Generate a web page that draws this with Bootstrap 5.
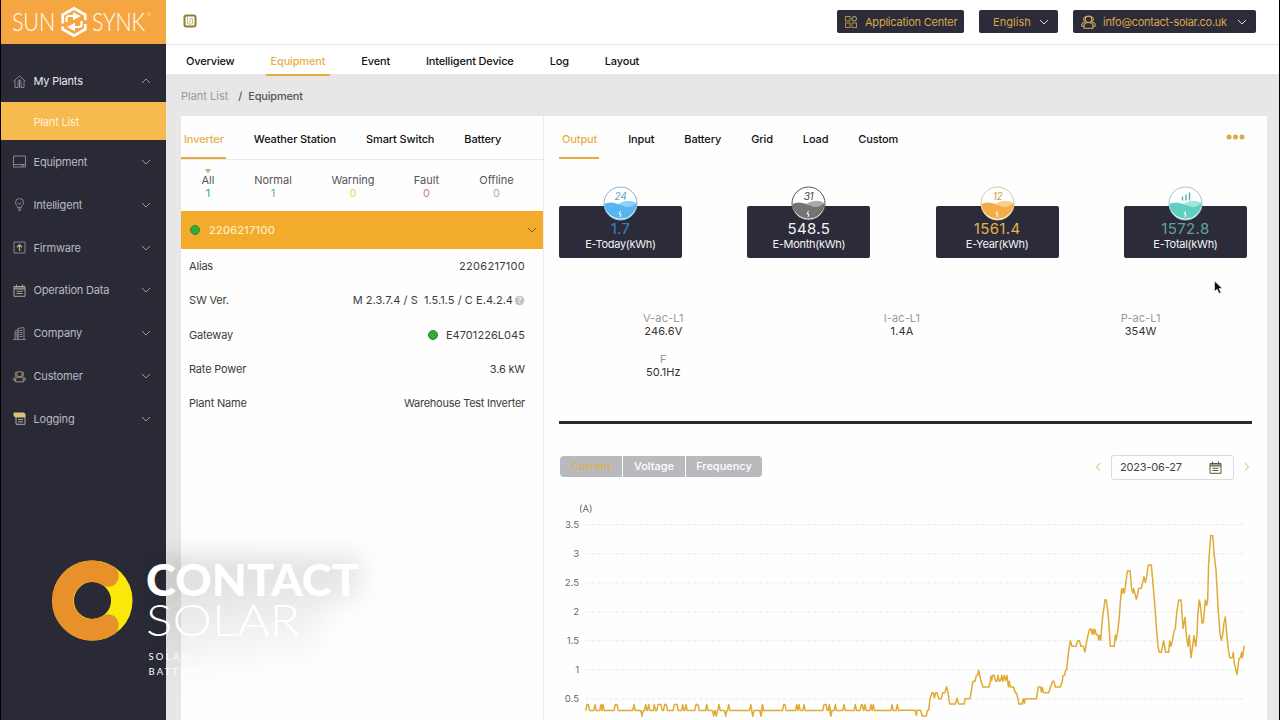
<!DOCTYPE html>
<html lang="en">
<head>
<meta charset="utf-8">
<meta name="viewport" content="width=device-width, initial-scale=1">
<title>Sunsynk – Equipment</title>
<link href="https://cdn.jsdelivr.net/npm/bootstrap@5.3.0/dist/css/bootstrap.min.css" rel="stylesheet">
<style>
:root{--gold:#d9a748;--ink:#2b2b3a}
body{font-family:Inter,"Liberation Sans",sans-serif;font-size:11px;line-height:14px;color:#333;background:#e7e7e7;height:720px;overflow:hidden;border-left:1px solid #000;border-right:1px solid #000;letter-spacing:-.18px}
svg{display:block;flex:none}
.side{width:165px;background:#292a35;color:#b9bac1}
.logo{height:44px;background:#f6a640}
.side-item{height:42.85px;padding:1px 15px 0 12px}
.side-item .ico{margin-right:7.500px}
.side-item.top{height:58px;padding-top:16px;color:#e8e8ea}
.side-sub{height:38px;background:#f6ba4f;color:#fdf3d8;padding-left:32.5px;padding-top:1px}
.ico{fill:none;stroke:#85868d;stroke-width:1}
.chev{fill:none;stroke:#a3997f;stroke-width:1}
.topbar{height:44.5px;border-bottom:1px solid #e4e4e4;padding:0 23px 0 17px}
.dark-btn{background:var(--ink);color:var(--gold);border-radius:2px;height:23px}
.tabs1{height:29.5px;color:#111;font-weight:500;letter-spacing:-.17px}
.tabs1 span{padding:9px 5px 0;height:31px}
.act{color:#e6b14a!important;border-bottom:2px solid #e6ab3c}
.crumb{height:42px;padding:1px 15px 0;color:#555;font-weight:500}
.panel-l{width:363px;background:#fefefe;border-right:1px solid #ececec}
.panel-r{width:723px;background:#fefefe}
.tabs2{height:43px;color:#111;font-weight:500;letter-spacing:-.13px}
.tabs2 span{height:43px;padding-top:16px}
.counts{height:52px;border-top:1px solid #e9e9e9;color:#555;line-height:12.6px;letter-spacing:0}
.counts>div{padding-top:14px}
.inv{height:38px;background:#f3ab2c;color:#fceccb;padding:0 6px 0 9px;font-weight:500;letter-spacing:.2px}
.dot{width:10px;height:10px;border-radius:50%;background:#37a93c;border:1px solid #2b8a30}
.info{height:34.25px;padding:0 18px 0 8px;color:#3c3c3c}
.num{letter-spacing:.06px}
.ecard{width:123px;height:52px;background:var(--ink);border-radius:2px;color:#f4f4f4;padding-top:14.5px;line-height:14px;letter-spacing:-.28px}
.ecard b{font-weight:400;font-size:15px;line-height:15px;letter-spacing:.35px}
.ecard svg{left:44px;top:-20px}
.cards{padding:47px 20px 0 15px}
.read{margin:54px 7px 0 0;line-height:13px;color:#333;letter-spacing:.1px}
.read i{font-style:normal;color:#999}
.rule{height:3px;background:#2a2933;margin:42px 15px 0}
.seg span{background:#b9b9be;color:#fff;height:21px;line-height:21px;font-weight:500;letter-spacing:0}
.date{width:123px;height:25px;border:1px solid #dcdcdc;border-radius:3px;color:#444}
.brand{left:30px;top:530px}
.pointer{left:1212px;top:280px}
</style>
</head>
<body class="d-flex position-relative">
<svg width="0" height="0" class="position-absolute"><defs>
<symbol id="dn" viewBox="0 0 10 6"><path d="M1 1l4 4 4-4"/></symbol>
<symbol id="people" viewBox="0 0 14 13"><circle cx="7" cy="4" r="3"/><path d="M2.8 12.3v-2C2.8 8 4.3 7 7 7s4.2 1 4.2 3.3v2zM4 6.2C2 5.8 1.8 2 4.3 1.3M10 6.2c2-.4 2.200-4.200-.3-4.900M.7 10.500C.6 8.500 1.500 7 3.500 6.800M.7 10.500h2M13.300 10.500c.1-2-.8-3.500-2.800-3.700M13.300 10.500h-2"/></symbol>
<symbol id="cal" viewBox="0 0 13 13"><path d="M1 2.500h11v9.800H1zM1 5h11M1 4h11M3.500.5v3M9.500.5v3M3.500 7.300h6M3.500 9.500h6"/></symbol>
</defs></svg>

<aside class="side d-flex flex-column">
  <div class="logo">
    <svg width="165" height="44" fill="#fff" font-family="Lato" font-weight="300" font-size="24.500">
      <text x="11" y="31" textLength="43" lengthAdjust="spacingAndGlyphs">SUN</text>
      <text x="91" y="31" textLength="53" lengthAdjust="spacingAndGlyphs">SYNK</text>
      <text x="146" y="17" font-size="5">®</text>
      <path d="M61.700 23.500V14.800L73 8.300l11.300 6.500V20" fill="none" stroke="#fff" stroke-width="2.800"/>
      <path d="M61.700 26.500v2.700L73 35.700l11.300-6.500V24" fill="none" stroke="#fff" stroke-width="2.800"/>
      <path d="M65.500 22v-3.500q0-2.500 2.500-2.500h5M80.500 21v3.500q0 2.500-2.500 2.500h-5" fill="none" stroke="#fff" stroke-width="2.200"/>
      <path d="M72 12.200l8 3.800-8 4.300zM74 22.700l-8 4.300 8 4.200z"/>
    </svg>
  </div>
  <div class="side-item top d-flex align-items-center">
    <svg class="ico" width="13" height="13"><path d="M.5 6.500L6.500.8l6 5.700M2 5.500v7h3v-6l1.500-2L8 6.500v6h3v-7M6.500 5v8"/></svg>
    <span>My Plants</span><svg class="chev ms-auto" width="10" height="6" style="transform:scaleY(-1)"><use href="#dn"/></svg></div>
  <div class="side-sub d-flex align-items-center">Plant List</div>
  <div class="side-item d-flex align-items-center"><svg class="ico" width="13" height="13"><path d="M.5 1h12v11H.5zM.5 9.500h12M8 10.900h3"/></svg><span>Equipment</span><svg class="chev ms-auto" width="10" height="6"><use href="#dn"/></svg></div>
  <div class="side-item d-flex align-items-center"><svg class="ico" width="13" height="13"><path d="M4.700 9.500C4.700 7.500 2.500 7 2.500 4.500a4 4 0 0 1 8 0c0 2.500-2.200 3-2.200 5zM4.700 11h3.600M5.300 12.500h2.400M5 4.500l1.500 2 1.500-2"/></svg><span>Intelligent</span><svg class="chev ms-auto" width="10" height="6"><use href="#dn"/></svg></div>
  <div class="side-item d-flex align-items-center"><svg class="ico" width="13" height="13"><path d="M1 1h11v11H1z"/><path d="M6.500 10V4M4 6.200l2.500-2.500L9 6.200" stroke="#c0a878" stroke-width="1.300"/></svg><span>Firmware</span><svg class="chev ms-auto" width="10" height="6"><use href="#dn"/></svg></div>
  <div class="side-item d-flex align-items-center"><svg class="ico" width="13" height="13" style="stroke:#aaa595"><use href="#cal"/></svg><span>Operation Data</span><svg class="chev ms-auto" width="10" height="6"><use href="#dn"/></svg></div>
  <div class="side-item d-flex align-items-center"><svg class="ico" width="13" height="13"><path d="M0 12.500h13M2 12V4l3-1v9M5 12V1.500l6-1V12M6.500 3.500h3M6.500 5.500h3M6.500 7.500h3M6.500 9.500h3M2.500 6h2M2.500 8h2M2.500 10h2"/></svg><span>Company</span><svg class="chev ms-auto" width="10" height="6"><use href="#dn"/></svg></div>
  <div class="side-item d-flex align-items-center"><svg class="ico" width="13" height="13" style="stroke:#b5a27c"><use href="#people"/></svg><span>Customer</span><svg class="chev ms-auto" width="10" height="6"><use href="#dn"/></svg></div>
  <div class="side-item d-flex align-items-center"><svg class="ico" width="13" height="13"><path d="M1 1h10l1 1v3H3L1 4z" fill="#dcc07c" stroke="#dcc07c"/><path d="M3 5v7.300h9V5M5 7.500h5M5 9.800h5" stroke="#aaa"/></svg><span>Logging</span><svg class="chev ms-auto" width="10" height="6"><use href="#dn"/></svg></div>
</aside>

<main class="flex-grow-1 d-flex flex-column">
  <header class="topbar bg-white d-flex align-items-center flex-shrink-0">
    <svg width="14" height="14" style="margin-top:-1px"><rect x="1.500" y="1.500" width="11" height="11" rx="2" fill="#fff" stroke="#8f7c35" stroke-width="2"/><path d="M4.500 3v7h5V4.500H7V9" fill="none" stroke="#cdbb78" stroke-width="1"/></svg>
    <div class="dark-btn ms-auto d-flex align-items-center px-2" style="width:127px">
      <svg width="12" height="12" fill="none" stroke="#b58c40"><rect x=".5" y=".5" width="4.500" height="4.500"/><circle cx="9.200" cy="2.800" r="2.300" stroke="#c9b8a0"/><rect x=".5" y="7" width="4.500" height="4.500"/><rect x="7" y="7" width="4.500" height="4.500"/></svg>
      <span class="text-nowrap" style="margin-left:8px;letter-spacing:-.22px">Application Center</span></div>
    <div class="dark-btn d-flex align-items-center" style="width:79px;margin-left:15px;padding:0 9px 0 14px"><span class="num">English</span><svg class="ms-auto" width="10" height="6" fill="none" stroke="#ddd"><use href="#dn"/></svg></div>
    <div class="dark-btn d-flex align-items-center" style="width:183px;margin-left:15px;padding:0 9px 0 8px"><svg width="15" height="14" fill="none" stroke="#d8ae5c"><use href="#people"/></svg><span style="margin-left:7px;letter-spacing:-.28px">info@contact-solar.co.uk</span><svg class="ms-auto" width="10" height="6" fill="none" stroke="#ddd"><use href="#dn"/></svg></div>
  </header>
  <nav class="tabs1 bg-white d-flex flex-shrink-0" style="padding-left:15px;gap:26px">
    <span>Overview</span><span class="act">Equipment</span><span>Event</span><span>Intelligent Device</span><span>Log</span><span>Layout</span>
  </nav>
  <div class="crumb d-flex align-items-center flex-shrink-0"><span style="color:#999;font-weight:400;letter-spacing:0">Plant List</span><span style="margin:0 6px 0 10px">/</span><span>Equipment</span></div>
  <div class="d-flex flex-grow-1" style="padding-left:15px;min-height:0">
    <section class="panel-l">
      <div class="tabs2 d-flex"><span class="act" style="padding-left:3px;padding-right:2px">Inverter</span><span style="margin-left:28px">Weather Station</span><span style="margin-left:30px">Smart Switch</span><span style="margin-left:30px">Battery</span></div>
      <div class="counts d-flex text-center position-relative">
        <svg class="position-absolute" style="left:24px;top:9px" width="6" height="5"><path d="M0 0h6L3 4.500z" fill="#c9b36a"/></svg>
        <div style="width:54px">All<br><span style="color:#3aa88c">1</span></div>
        <div style="width:76px">Normal<br><span style="color:#5cc25c">1</span></div>
        <div style="width:84px">Warning<br><span style="color:#dcdc5c">0</span></div>
        <div style="width:63px">Fault<br><span style="color:#d08090">0</span></div>
        <div style="width:77px">Offline<br><span style="color:#b0b0b0">0</span></div>
      </div>
      <div class="inv d-flex align-items-center"><span class="dot"></span><span style="margin-left:9px">2206217100</span><svg class="ms-auto" width="10" height="6" fill="none" stroke="#7a5620"><use href="#dn"/></svg></div>
      <div class="info d-flex align-items-center">Alias<span class="ms-auto" style="letter-spacing:.3px">2206217100</span></div>
      <div class="info d-flex align-items-center">SW Ver.<span class="ms-auto num" style="white-space:pre;letter-spacing:.04px">M 2.3.7.4 / S  1.5.1.5 / C E.4.2.4</span><svg width="11" height="11" style="margin-left:1px"><circle cx="5.500" cy="5.500" r="4.800" fill="#c4c4c4"/><text x="5.500" y="8.300" font-size="8" fill="#fff" text-anchor="middle">?</text></svg></div>
      <div class="info d-flex align-items-center">Gateway<span class="dot ms-auto"></span><span class="num" style="margin-left:8px">E4701226L045</span></div>
      <div class="info d-flex align-items-center">Rate Power<span class="ms-auto">3.6 kW</span></div>
      <div class="info d-flex align-items-center">Plant Name<span class="ms-auto" style="letter-spacing:-.26px">Warehouse Test Inverter</span></div>
    </section>
    <section class="panel-r">
      <div class="tabs2 d-flex" style="padding-left:15px"><span class="act" style="padding-left:3px;padding-right:2px">Output</span><span style="margin-left:29px">Input</span><span style="margin-left:30px">Battery</span><span style="margin-left:30px">Grid</span><span style="margin-left:30px">Load</span><span style="margin-left:30px">Custom</span>
        <svg class="ms-auto" style="margin:18px 22px 0 0" width="19" height="6" fill="#d9ab4c"><circle cx="3" cy="3" r="2.500"/><circle cx="9.500" cy="3" r="2.500"/><circle cx="16" cy="3" r="2.500"/></svg></div>
      <div class="cards d-flex justify-content-between text-center">
        <div class="ecard position-relative"><svg class="position-absolute" width="35" height="35"><circle cx="17.500" cy="17.500" r="16.500" fill="#fff" stroke="#7fb4d0"/><path d="M1.200 18q6-3 14 0t18.500-1A16.300 16.300 0 0 1 1.200 18z" fill="#58b4f2"/><path d="M15 18q10-6 18.500-1-4 4-10 4z" fill="#8fd0fa"/><text x="17.500" y="14" font-size="10" font-style="italic" fill="#5fa8cc" text-anchor="middle">24</text><path d="M17.500 25l-1.500 3h2l-1 3" stroke="#fff" fill="none"/></svg><b style="color:#2f84c8">1.7</b><br>E-Today(kWh)</div>
        <div class="ecard position-relative"><svg class="position-absolute" width="35" height="35"><circle cx="17.500" cy="17.500" r="16.500" fill="#fff" stroke="#555"/><path d="M1.200 18q6-3 14 0t18.500-1A16.300 16.300 0 0 1 1.200 18z" fill="#747474"/><path d="M15 18q10-6 18.500-1-4 4-10 4z" fill="#aaa"/><text x="17.500" y="14" font-size="10" font-style="italic" fill="#444" text-anchor="middle">31</text><path d="M17.500 25l-1.500 3h2l-1 3" stroke="#fff" fill="none"/></svg><b>548.5</b><br>E-Month(kWh)</div>
        <div class="ecard position-relative"><svg class="position-absolute" width="35" height="35"><circle cx="17.500" cy="17.500" r="16.500" fill="#fff" stroke="#dcc89a"/><path d="M1.200 18q6-3 14 0t18.500-1A16.300 16.300 0 0 1 1.200 18z" fill="#f2ad48"/><path d="M15 18q10-6 18.500-1-4 4-10 4z" fill="#f8cf90"/><text x="17.500" y="14" font-size="10" font-style="italic" fill="#cf9f4a" text-anchor="middle">12</text><path d="M17.500 25l-1.500 3h2l-1 3" stroke="#fff" fill="none"/></svg><b style="color:#e8b04a">1561.4</b><br>E-Year(kWh)</div>
        <div class="ecard position-relative"><svg class="position-absolute" width="35" height="35"><circle cx="17.500" cy="17.500" r="16.500" fill="#fff" stroke="#9cc8c0"/><path d="M1.200 18q6-3 14 0t18.500-1A16.300 16.300 0 0 1 1.200 18z" fill="#5dd0bf"/><path d="M15 18q10-6 18.500-1-4 4-10 4z" fill="#a0e6da"/><path d="M14.500 14.500v-4M18 14.500v-6M21.500 14.500v-8" stroke="#5fb3a5" stroke-width="1.500"/><path d="M17.500 25l-1.500 3h2l-1 3" stroke="#fff" fill="none"/></svg><b style="color:#62a3a0">1572.8</b><br>E-Total(kWh)</div>
      </div>
      <div class="read row g-0 text-center row-cols-3" style="row-gap:14.500px">
        <div><i>V-ac-L1</i><br>246.6V</div><div><i>I-ac-L1</i><br>1.4A</div><div><i>P-ac-L1</i><br>354W</div>
        <div><i>F</i><br>50.1Hz</div>
      </div>
      <div class="rule"></div>
      <div class="d-flex align-items-center" style="margin:31px 17px 0 16px;height:25px">
        <div class="seg d-flex text-center" style="gap:1px;margin-bottom:2px"><span class="rounded-start-1" style="width:62px;color:#d9af55">Current</span><span style="width:62px">Voltage</span><span class="rounded-end-1" style="width:76px">Frequency</span></div>
        <svg class="ms-auto" width="6" height="10" style="margin-right:10px" fill="none" stroke="#c9c069"><path d="M5 1L1.500 5 5 9"/></svg>
        <div class="date d-flex align-items-center" style="padding:0 11px 0 8px"><span>2023-06-27</span><svg class="ms-auto" width="13" height="13" fill="none" stroke="#5d573f"><use href="#cal"/></svg></div>
        <svg width="6" height="10" style="margin-left:10px" fill="none" stroke="#c9c069"><path d="M1 1l3.500 4L1 9"/></svg>
      </div>
      <svg width="723" height="240" viewBox="544 480 723 240" font-size="9.500" fill="#666" letter-spacing="0">
        <text x="579" y="512">(A)</text>
        <g id="axis" text-anchor="end"></g>
        <g fill="none" stroke="#e0ab35" stroke-width="1.500" stroke-linejoin="round">
          <path id="night"/>
          <g transform="translate(900 520) scale(.33333)" stroke-width="4.500"><polyline points="0,571 46,571 49,586 52,571 62,571 67,588 79,588 82,572 86,570 90,536 96,518 100,518 103,534 107,518 111,518 116,536 124,536 128,518 135,518 140,500 144,518 149,552 166,552 171,535 176,552 192,552 196,536 210,536 216,500 219,484 225,484 229,467 233,465 236,451 239,466 243,482 249,501 267,501 271,483 273,468 275,482 278,466 283,466 287,484 291,483 294,466 298,484 302,482 305,466 309,484 313,466 317,482 321,466 325,500 328,484 331,501 341,501 346,519 350,520 357,552 366,552 370,536 373,550 376,536 409,536 415,501 422,501 424,516 427,503 431,518 446,518 452,500 458,484 462,484 466,501 481,501 487,484 489,467 494,465 497,450 500,448 505,400 511,362 516,379 528,379 533,362 538,362 543,379 550,379 555,396 559,370 563,350 569,327 573,327 576,342 579,328 582,343 585,328 589,344 593,344 596,360 599,346 602,360 607,300 615,239 619,240 626,300 631,379 643,379 646,346 648,360 653,335 658,290 662,235 665,206 668,219 670,206 673,219 676,200 682,153 690,152 695,206 699,219 701,206 705,222 709,238 713,222 716,205 724,205 728,188 732,170 736,187 740,170 745,135 754,135 759,190 764,250 769,320 774,379 778,397 784,397 791,363 797,397 806,397 809,363 813,379 817,362 822,335 826,325 830,280 836,240 843,240 846,280 849,325 852,308 855,292 859,345 864,379 868,346 873,413 878,379 882,347 887,379 891,345 893,290 898,240 902,262 906,309 910,308 916,240 920,256 923,240 926,130 932,47 938,47 942,100 948,150 954,260 960,340 964,361 968,345 972,308 976,291 980,340 984,379 989,413 997,413 1000,397 1003,430 1011,464 1017,415 1021,414 1025,397 1027,413 1033,377"/></g>
        </g>
      </svg>
    </section>
  </div>
</main>

<svg class="brand position-absolute" width="380" height="180" viewBox="30 530 380 180">
  <defs><filter id="soft" x="-30%" y="-40%" width="160%" height="180%"><feGaussianBlur stdDeviation="12"/></filter>
  <linearGradient id="fade" x1="0" y1="0" x2=".25" y2="1"><stop offset="0" stop-color="#000" stop-opacity=".15"/><stop offset="1" stop-color="#000" stop-opacity="0"/></linearGradient></defs>
  <path d="M150 556H360V596L320 612V680H150z" fill="url(#fade)" filter="url(#soft)"/>
  <circle cx="91.500" cy="600.500" r="29.300" fill="none" stroke="#fae80a" stroke-width="21.500"/>
  <path d="M107 576A29.300 29.300 0 1 0 107 625" fill="none" stroke="#e8912a" stroke-width="21.500" stroke-linecap="round"/>
  <g fill="#fff" font-family="Lato,sans-serif" letter-spacing="0">
    <text x="145" y="595.500" font-size="43" font-weight="900" textLength="213" lengthAdjust="spacingAndGlyphs">CONTACT</text>
    <text x="145" y="636" font-size="43" font-weight="300" textLength="154" lengthAdjust="spacingAndGlyphs">SOLAR</text>
    <g font-size="9.500"><text x="147.500" y="659.500" letter-spacing="2.200">SOLAR</text>
    <text x="147.500" y="675" letter-spacing="2.200">BATTERY</text></g>
  </g>
</svg>
<svg class="pointer position-absolute" width="11" height="15"><path d="M1.500 1v10.500l2.600-2.300 2 4.300 1.900-.9-2-4.100h3.400z" fill="#111" stroke="#fff" stroke-width=".6"/></svg>

<script src="https://cdn.jsdelivr.net/npm/bootstrap@5.3.0/dist/js/bootstrap.bundle.min.js"></script>
<script>
// grid lines and y labels
let axis = '';
for (let i = 0; i < 7; i++) {
  const y = 524.7 + i * 29.05;
  axis += `<path d="M585 ${y}H1244" stroke="#e6ebed" stroke-dasharray="4 2"/><text x="579" y="${y + 3.3}">${3.5 - i * .5}</text>`;
}
document.getElementById('axis').innerHTML = axis;
// overnight readings hover at 0.3 A; each entry is [start, end, direction] of a short blip
const blips = [[587,588.3,1],[595,595,1],[601,601,1],[603,603,1],[615.3,617,1],[634,634,1],[642,642,-1],[645.7,645.7,1],[648.7,648.7,1],[654.3,654.3,1],[658,661,1],[664.7,666.3,1],[674.3,677,1],[682.7,682.7,1],[686,686,1],[696,698,1],[706.7,706.7,1],[713.7,713.7,-1],[716.3,716.3,-1],[719,719,1],[725.7,725.7,-1],[728.7,728.7,1],[750.7,750.7,1],[752.8,752.8,-1],[761,761,-1],[762.5,762.5,1],[783.7,785,1],[796.7,796.7,1],[799,799,1],[804,804,1],[824,826,1],[829.3,829.3,1],[830.9,830.9,-1],[835.3,835.3,1],[844,844,1],[855.3,855.3,1],[861.3,862.3,1],[865,865,1],[871,871,1],[873.3,873.3,1],[892,892,1],[897.3,897.3,1]];
let d = 'M585.5 710.4';
for (const [a, b, s] of blips) { const y = 710.4 - s * 5.8; d += `L${a - 1.2} 710.4L${a} ${y}L${b} ${y}L${b + 1.2} 710.4`; }
document.getElementById('night').setAttribute('d', d + 'H900.5');
</script>
</body>
</html>
